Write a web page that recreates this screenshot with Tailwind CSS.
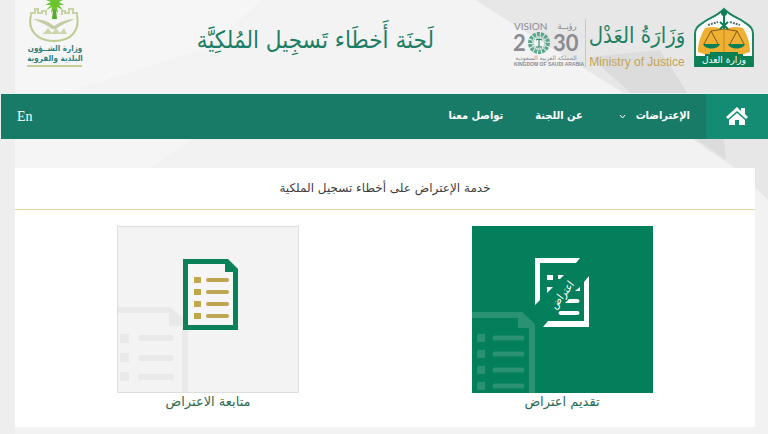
<!DOCTYPE html>
<html lang="ar" dir="rtl">
<head>
  <meta charset="UTF-8">
  <meta name="viewport" content="width=device-width, initial-scale=1.0">
  <title>لجنة أخطاء تسجيل الملكية</title>
  <script src="https://cdn.jsdelivr.net/npm/@tailwindcss/browser@4"></script>
</head>
<body class="relative min-h-screen bg-[#f2f2f2] font-['DejaVu_Sans',sans-serif]">
  <!-- Background facets -->
  <svg class="absolute inset-0 -z-10 w-full h-full" viewBox="0 0 768 434" preserveAspectRatio="none" aria-hidden="true">
    <path d="M0 0H15V434H0z" fill="#eeeeee"/>
    <path d="M15 94V0H262L208 48L60 94z" fill="#f6f6f6"/>
    <path d="M60 94L208 48L262 0H475L625 94z" fill="#f3f3f3"/>
    <path d="M475 0H768V200L735 168L625 94z" fill="#e7e7e7"/>
    <path d="M590 57L660 50L688 94L724 139L726 160L696 139L632 94z" fill="#dcdcdc"/>
    <path d="M15 139H192L150 168H15z" fill="#f5f5f5"/>
  </svg>

  <!-- Header -->
  <header class="flex items-start h-[94px] ps-[13px] pe-6 border-b border-[#e6f4f1]">
    <!-- Ministry of Justice emblem -->
    <svg class="w-[62px] h-[62px] mt-[6px] shrink-0" viewBox="0 0 62 62" role="img" aria-label="وزارة العدل">
      <path d="M2 60V28C2 21 7 19 11 16C16 12 23 11 31 3C39 11 46 12 51 16C55 19 60 21 60 28V60z" fill="#fff" stroke="#1a8560" stroke-width="2"/>
      <path d="M5 46C5 36 8 29 12 22C19 20 26 21 31 24C36 21 43 20 50 22C54 29 57 36 57 46L45 50H17z" fill="#efb033"/>
      <path d="M31 22V48" stroke="#c98a1c" stroke-width="1"/>
      <path d="M31 7V23M27 16L35 23M35 16L27 23" stroke="#0c8055" stroke-width="2"/>
      <circle cx="31" cy="7" r="3" fill="#0c8055"/>
      <path d="M15 19L25 16M37 16L47 19" stroke="#5b6e66" stroke-width="2" stroke-dasharray="2 1"/>
      <path d="M18 25L31 23L44 25M18 25L11 38M18 25L25 38M44 25L37 38M44 25L51 38" fill="none" stroke="#7a5a1c" stroke-width="1"/>
      <path d="M10 38H27C25 44 12 44 10 38zM35 38H52C50 44 37 44 35 38z" fill="#0c8055"/>
      <path d="M2 50H12V48H17V46H45V48H50V50H60V61H2z" fill="#0c8055"/>
      <text x="31" y="57" text-anchor="middle" font-family="DejaVu Sans" font-size="9" fill="#fff">وزارة العدل</text>
    </svg>

    <!-- Ministry name -->
    <div class="w-[98px] mt-5 ms-[7px] shrink-0 text-center">
      <p class="h-[34px] text-[22px] leading-8 font-['DejaVu_Sans_Condensed','DejaVu_Sans',sans-serif] text-[#1d8263] whitespace-nowrap">وَزَارَةُ العَدْل</p>
      <p class="text-xs leading-4 font-['Liberation_Sans',sans-serif] text-[#c5a352] whitespace-nowrap" dir="ltr">Ministry of Justice</p>
    </div>

    <!-- Vision 2030 -->
    <div class="w-[76px] h-12 mt-[19px] ms-[2px] shrink-0 border-s border-[#c9c9c9]">
      <svg class="w-[75px] h-12" viewBox="0 0 75 48" role="img" aria-label="Vision 2030">
        <g fill="#8b8b94" direction="ltr">
          <text x="4" y="11" font-family="Lato" font-size="10">VISION</text>
          <text x="57" y="10" text-anchor="middle" font-family="DejaVu Sans Condensed, DejaVu Sans" font-size="9">رؤيــة</text>
          <text x="3" y="32" font-family="Lato" font-weight="bold" font-size="22">2</text>
          <text x="43" y="32" font-family="Lato" font-weight="bold" font-size="22">30</text>
          <text x="36" y="41" text-anchor="middle" font-family="DejaVu Sans" font-size="6">المملكة العربية السعودية</text>
          <text x="4" y="47" font-family="Liberation Sans" font-weight="bold" font-size="5">KINGDOM OF SAUDI ARABIA</text>
        </g>
        <g fill="none">
          <circle cx="29" cy="24" r="9" stroke="#58a68c" stroke-width="4" stroke-dasharray="3 1"/>
          <circle cx="29" cy="24" r="6" stroke="#88c4b0" stroke-width="2" stroke-dasharray="1 1"/>
          <path d="M29 20V28M26 21L29 20L32 21M26 28H32" stroke="#287b62" stroke-width="1"/>
        </g>
      </svg>
    </div>

    <!-- Committee title -->
    <h1 class="flex-1 mt-[18px] ps-[76px] text-2xl leading-[44px] font-['DejaVu_Sans_Condensed','DejaVu_Sans',sans-serif] text-[#1b7d66] whitespace-nowrap">لَجنَة أَخطَاء تَسجِيل المُلكِيَّة</h1>

    <!-- Municipal ministry logo -->
    <svg class="w-[60px] h-[70px] shrink-0" viewBox="0 0 60 70" role="img" aria-label="وزارة الشؤون البلدية والقروية">
      <path d="M7 15C3 30 13 41 30 41C48 41 56 30 53 15" fill="none" stroke="#bccb91" stroke-width="2"/>
      <path d="M7 16V13H11V9H14V13H18V11H22V15M53 16V13H49V9H45V13H41V11H38V15" fill="none" stroke="#c9d4a6" stroke-width="2"/>
      <path d="M9 19C19 19 25 22 30 26C36 22 43 19 51 19C45 22 38 24 32 29H28C22 24 15 22 9 19z" fill="#c3cda5"/>
      <path d="M20 33L24 28L28 33L32 28L36 33L40 28L43 34H18z" fill="#ccd6ae"/>
      <path d="M30 0H31L33 19H28z" fill="#58aa33"/>
      <path d="M22 0L27 2L21 5L27 5L22 10L28 7L27 13L30 9L34 13L33 7L39 10L35 5L40 5L35 2L39 0z" fill="#6cc42f"/>
      <text x="31" y="51" text-anchor="middle" font-family="DejaVu Sans Condensed, DejaVu Sans" font-weight="bold" font-size="8" fill="#307f7d">وزارة الشــؤون</text>
      <text x="31" y="61" text-anchor="middle" font-family="DejaVu Sans Condensed, DejaVu Sans" font-weight="bold" font-size="8" fill="#307f7d">البلدية والقروية</text>
      <path d="M3 66H58" stroke="#c3cd97" stroke-width="2"/>
    </svg>
  </header>

  <!-- Navigation -->
  <nav class="flex items-stretch h-[45px] ml-px bg-[#177b68] text-white text-[11px] font-bold font-['DejaVu_Sans_Condensed','DejaVu_Sans',sans-serif]">
    <a href="#" aria-label="الرئيسية" class="flex items-center justify-center w-[62px] bg-[#148c74]">
      <svg class="w-[22px] h-[19px]" viewBox="0 0 22 19" fill="currentColor">
        <path d="M11 0L15 4V1H19V7L22 10L20 12L11 4L2 12L0 10z"/>
        <path d="M11 6L19 13V18H13V13H9V18H3V13z"/>
      </svg>
    </a>
    <a href="#" class="flex items-center gap-[10px] ps-4 pe-5 whitespace-nowrap">
      الإعتراضات
      <svg class="w-[7px] h-[5px]" viewBox="0 0 7 5" fill="none" stroke="currentColor"><path d="M1 1L3.5 4L6 1"/></svg>
    </a>
    <a href="#" class="flex items-center px-4 whitespace-nowrap">عن اللجنة</a>
    <a href="#" class="flex items-center px-4 whitespace-nowrap">تواصل معنا</a>
    <a href="#" class="flex items-center ms-auto px-4 text-sm font-normal font-['Liberation_Serif',serif]">En</a>
  </nav>

  <!-- Service card -->
  <main class="mt-[29px] mb-[7px] ml-[15px] mr-[13px] pb-4 bg-white">
    <h2 class="h-[42px] border-b border-[#dcd9a9] text-center text-xs leading-[40px] text-[#3d3d3d]">خدمة الإعتراض على أخطاء تسجيل الملكية</h2>
    <div class="grid grid-cols-2 px-4 pt-4">
      <a href="#" class="flex flex-col items-center text-[13px] leading-[18px] text-[#2d6a56]">
        <svg class="w-[181px] h-[167px] bg-[#047f5b]" viewBox="0 0 181 167" aria-hidden="true">
          <!-- faded sheet -->
          <g fill="#2a9273">
            <path d="M0 86H50L63 98V167H57V102H46V92H0z"/>
            <path d="M5 108h8v8h-8zM5 124h8v8h-8zM5 140h8v8h-8zM5 156h8v8h-8z"/>
          </g>
          <path d="M23 112H50M23 128H50M23 144H50M23 160H50" stroke="#2a9273" stroke-width="5" stroke-linecap="round"/>
          <!-- stamped sheet -->
          <g fill="#fff">
            <path d="M63 32H108L104 37H68V74L63 79z"/>
            <path d="M117 50V101H71L76 95H112V56z"/>
            <path d="M75 49h6v5h-6zM75 61h6l-6 6zM86 49h6l-4 4h-2zM108 61v4h-5z"/>
            <path d="M97 73H106Q109 75 106 77H93zM88 85H106Q109 87 106 89H88Q85 87 88 85z"/>
          </g>
          <text x="0" y="0" transform="translate(93 71) rotate(-52)" text-anchor="middle" font-family="DejaVu Sans Condensed, DejaVu Sans" font-size="11" fill="#fff">اعتراض</text>
        </svg>
        تقديم اعتراض
      </a>
      <a href="#" class="flex flex-col items-center text-[13px] leading-[18px] text-[#2d6a56]">
        <svg class="w-[182px] h-[167px] bg-[#f3f3f3] border border-[#dedede]" viewBox="0 0 180 165" aria-hidden="true">
          <!-- faded sheet -->
          <g fill="#e9e9e9">
            <path d="M0 80H52L70 95V165H64V99H51V86H0z"/>
            <path d="M2 107h9v9h-9zM2 126h9v9h-9zM2 145h9v9h-9z"/>
          </g>
          <path d="M23 111H53M23 131H53M23 150H53" stroke="#e9e9e9" stroke-width="6" stroke-linecap="round"/>
          <!-- list sheet -->
          <path d="M65 32H110L120 42V103H65z" fill="#0c8058"/>
          <path d="M70 37H107V45H115V98H70z" fill="#f6f6f6"/>
          <path d="M76 50h7v6h-7zM76 62h7v6h-7zM76 74h7v6h-7zM76 86h7v6h-7z" fill="#c0a748"/>
          <path d="M90 53H109M90 65H109M90 77H109M90 89H109" stroke="#bda552" stroke-width="4" stroke-linecap="round"/>
        </svg>
        متابعة الاعتراض
      </a>
    </div>
  </main>
</body>
</html>
